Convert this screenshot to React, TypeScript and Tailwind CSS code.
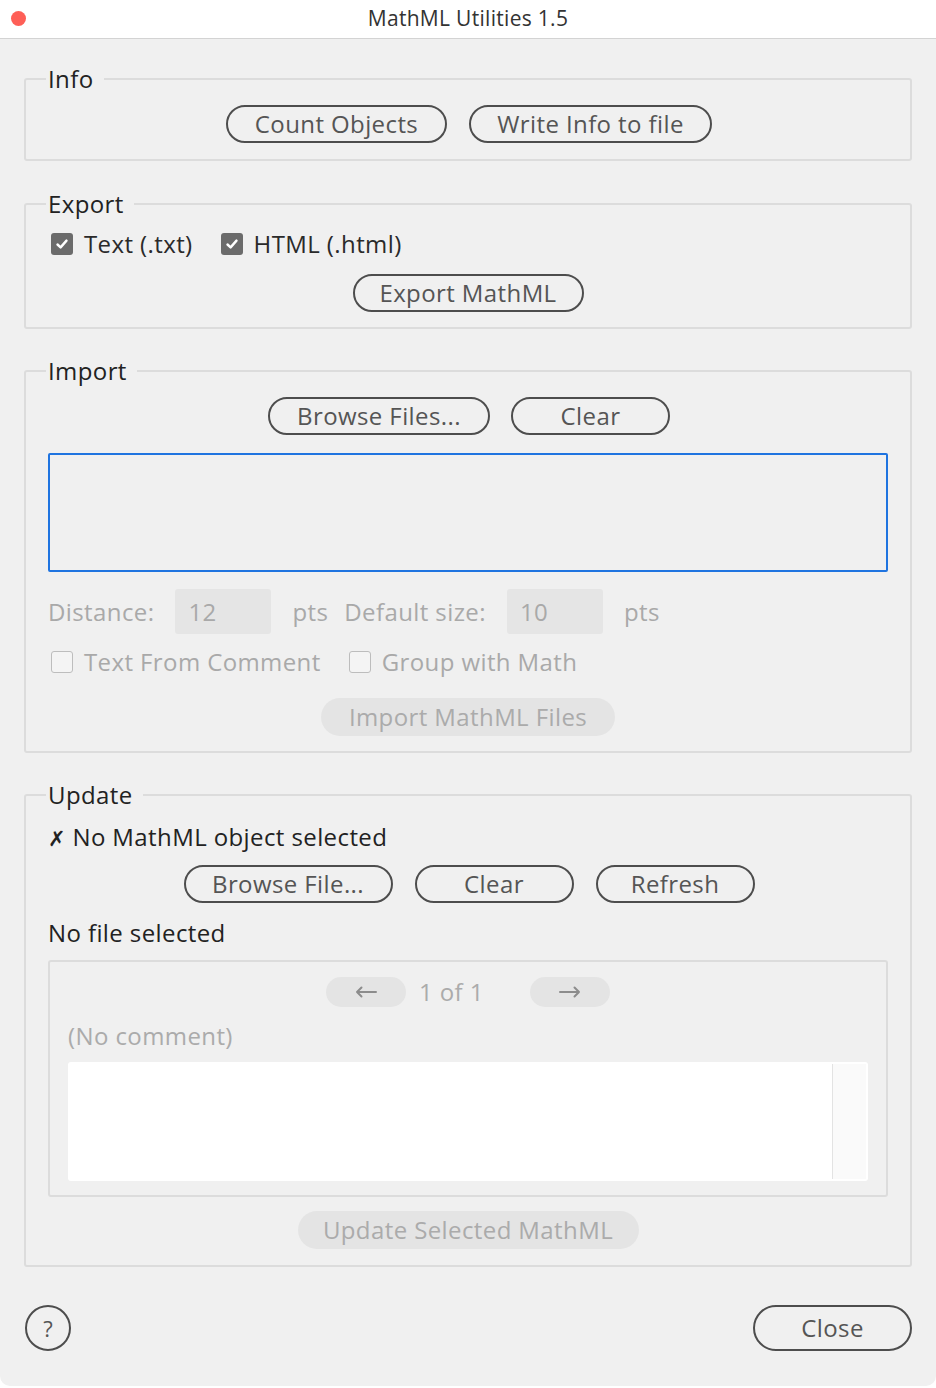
import { type ReactNode } from 'react';

const FONT = "font-['Open_Sans','Noto_Sans',sans-serif]";

const Pill = ({ children, w, h = 'h-[38px]' }: { children: ReactNode; w: string; h?: string }) => (
  <button className={`${w} ${h} shrink-0 rounded-full border-2 border-[#4d4d4d] text-[24px] tracking-[0.4px] leading-none text-[#555] flex items-center justify-center`}>
    {children}
  </button>
);

const DisabledPill = ({ children, w }: { children: ReactNode; w: string }) => (
  <button disabled className={`${w} h-[38px] rounded-full bg-[#e4e4e4] text-[24px] tracking-[0.4px] leading-none text-[#ababab] flex items-center justify-center`}>
    {children}
  </button>
);

const Group = ({ title, children, className = '' }: { title: string; children: ReactNode; className?: string }) => (
  <fieldset className={`border-2 border-[#dcdcdc] rounded-[3px] px-[22px] ${className}`}>
    <legend className="ml-[-2px] px-[2px] h-[30px] leading-[30px] text-[24px] tracking-[0.4px] text-[#222]">
      <span className="bg-[#f0f0f0] pr-[8px]">{title}</span>
    </legend>
    {children}
  </fieldset>
);

const CheckBox = ({ checked }: { checked?: boolean }) =>
  checked ? (
    <span className="shrink-0 w-[22px] h-[22px] rounded-[3px] bg-[#6b6b6b] flex items-center justify-center">
      <svg width="14" height="14" viewBox="0 0 14 14" fill="none">
        <path d="M2.5 7.5 L5.6 10.4 L11.5 3.6" stroke="white" strokeWidth="2.4" strokeLinecap="round" strokeLinejoin="round" />
      </svg>
    </span>
  ) : (
    <span className="shrink-0 w-[22px] h-[22px] rounded-[3px] border-[1.5px] border-[#bdbdbd] bg-[#f4f4f4]" />
  );

const Arrow = ({ dir }: { dir: 'left' | 'right' }) => (
  <svg width="22" height="12" viewBox="0 0 22 12" fill="none">
    {dir === 'left' ? (
      <path d="M21 6 H2 M6.5 1.5 L2 6 L6.5 10.5" stroke="#8c8c8c" strokeWidth="2" strokeLinecap="round" strokeLinejoin="round" />
    ) : (
      <path d="M1 6 H20 M15.5 1.5 L20 6 L15.5 10.5" stroke="#8c8c8c" strokeWidth="2" strokeLinecap="round" strokeLinejoin="round" />
    )}
  </svg>
);

export default function App() {
  return (
    <div className={`w-[936px] h-[1388px] bg-white ${FONT}`}>
      {/* title bar */}
      <div className="h-[39px] bg-white border-b border-[#d3d3d3] flex items-center justify-center relative">
        <span className="absolute left-[11px] top-[11px] w-[15px] h-[15px] rounded-full bg-[#fe5f57]" />
        <span className="text-[21px] tracking-[0.3px] text-[#333]">MathML Utilities 1.5</span>
      </div>

      <div className="h-[1347px] bg-[#f0f0f0] rounded-b-[10px] px-6 pt-[25px] flex flex-col">
        <Group title="Info" className="pt-[11px] pb-[16px]">
          <div className="flex justify-center gap-[22px] pl-[2px]">
            <Pill w="w-[221px]">Count Objects</Pill>
            <Pill w="w-[243px]">Write Info to file</Pill>
          </div>
        </Group>

        <Group title="Export" className="mt-[28px] pt-[10px] pb-[15px]">
          <div className="h-[30px] flex items-center text-[24px] tracking-[0.4px] text-[#2a2a2a] pl-[3px]">
            <CheckBox checked />
            <span className="ml-[11px]">Text (.txt)</span>
            <span className="ml-[28px] flex"><CheckBox checked /></span>
            <span className="ml-[11px]">HTML (.html)</span>
          </div>
          <div className="mt-[15px] flex justify-center">
            <Pill w="w-[231px]">Export MathML</Pill>
          </div>
        </Group>

        <Group title="Import" className="mt-[27px] pt-[11px] pb-[15px]">
          <div className="flex justify-center gap-[21px] pl-[2px]">
            <Pill w="w-[222px]">Browse Files...</Pill>
            <Pill w="w-[159px]">Clear</Pill>
          </div>
          <div className="mt-[18px] h-[119px] border-2 border-[#1f74e0] rounded-[2px]" />
          <div className="mt-[17px] h-[45px] flex items-center text-[24px] tracking-[0.4px] text-[#a9a9a9]">
            <span>Distance:</span>
            <span className="ml-[21px] w-[96px] h-[45px] bg-[#e5e5e5] rounded-[3px] pl-[13px] flex items-center">12</span>
            <span className="ml-[21px]">pts</span>
            <span className="ml-[16px]">Default size:</span>
            <span className="ml-[21px] w-[96px] h-[45px] bg-[#e5e5e5] rounded-[3px] pl-[13px] flex items-center">10</span>
            <span className="ml-[21px]">pts</span>
          </div>
          <div className="mt-[13px] h-[30px] flex items-center text-[24px] tracking-[0.4px] text-[#a9a9a9] pl-[3px]">
            <CheckBox />
            <span className="ml-[11px]">Text From Comment</span>
            <span className="ml-[28px] flex"><CheckBox /></span>
            <span className="ml-[11px]">Group with Math</span>
          </div>
          <div className="mt-[21px] flex justify-center">
            <DisabledPill w="w-[294px]">Import MathML Files</DisabledPill>
          </div>
        </Group>

        <Group title="Update" className="mt-[27px] pt-[12px] pb-[16px]">
          <div className="h-[30px] leading-[30px] text-[24px] tracking-[0.4px] text-[#222]">
            <span className="text-[21px] mr-[6px]">✗</span>No MathML object selected
          </div>
          <div className="mt-[13px] flex justify-center gap-[22px] pl-[2px]">
            <Pill w="w-[209px]">Browse File...</Pill>
            <Pill w="w-[159px]">Clear</Pill>
            <Pill w="w-[159px]">Refresh</Pill>
          </div>
          <div className="mt-[15px] h-[30px] leading-[30px] text-[24px] tracking-[0.4px] text-[#222]">No file selected</div>

          <div className="mt-[12px] border-2 border-[#dcdcdc] rounded-[3px] px-[18px] pt-[12px] pb-[14px]">
            <div className="flex justify-center items-center">
              <span className="w-[80px] h-[30px] rounded-full bg-[#e4e4e4] flex items-center justify-center">
                <Arrow dir="left" />
              </span>
              <span className="w-[124px] pl-[13px] text-[24px] tracking-[0.4px] text-[#ababab]">1 of 1</span>
              <span className="w-[80px] h-[30px] rounded-full bg-[#e4e4e4] flex items-center justify-center">
                <Arrow dir="right" />
              </span>
            </div>
            <div className="mt-[11px] h-[30px] leading-[30px] text-[24px] tracking-[0.4px] text-[#ababab]">(No comment)</div>
            <div className="mt-[11px] h-[119px] bg-white rounded-[3px] flex justify-end py-[2px] pr-[2px]">
              <div className="w-[34px] h-full border-l border-[#e3e3e3] bg-[#fafafa]" />
            </div>
          </div>

          <div className="mt-[14px] flex justify-center">
            <DisabledPill w="w-[341px]">Update Selected MathML</DisabledPill>
          </div>
        </Group>

        <div className="mt-[38px] flex items-center justify-between pl-[1px]">
          <button className="w-[46px] h-[46px] rounded-full border-2 border-[#4d4d4d] text-[22px] text-[#555] flex items-center justify-center">?</button>
          <Pill w="w-[159px]" h="h-[46px]">Close</Pill>
        </div>
      </div>
    </div>
  );
}
